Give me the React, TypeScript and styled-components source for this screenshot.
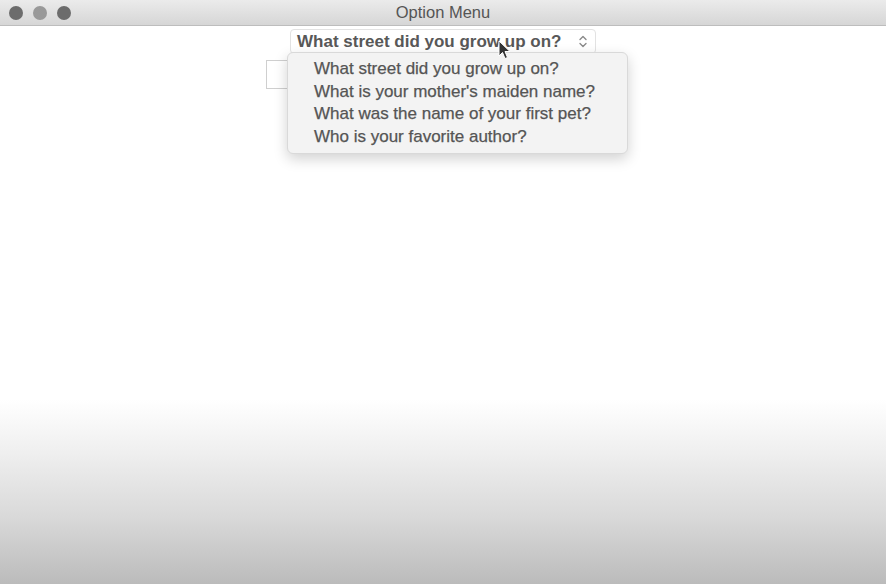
import styled, { createGlobalStyle } from 'styled-components'

const GlobalStyle = createGlobalStyle`
  html, body {
    margin: 0;
    padding: 0;
    height: 100%;
    overflow: hidden;
  }
  body {
    font-family: "Liberation Sans", "DejaVu Sans", Arial, sans-serif;
  }
  #root {
    height: 100%;
  }
`

const questions = [
  'What street did you grow up on?',
  "What is your mother's maiden name?",
  'What was the name of your first pet?',
  'Who is your favorite author?',
]

const Window = styled.div`
  display: flex;
  flex-direction: column;
  height: 100vh;
  width: 100vw;
`

const TitleBar = styled.div`
  position: relative;
  height: 25px;
  flex: none;
  display: flex;
  align-items: center;
  justify-content: center;
  background: linear-gradient(#ebebeb, #d6d6d6);
  border-bottom: 1px solid #bdbdbd;
`

const Lights = styled.div`
  position: absolute;
  left: 9px;
  top: 6px;
  display: flex;
  gap: 10px;
`

const Light = styled.span<{ $dotted?: boolean }>`
  width: 14px;
  height: 14px;
  border-radius: 50%;
  background: ${(p) =>
    p.$dotted
      ? 'radial-gradient(circle, #8a8a8a 0.6px, transparent 0.9px) 0 0 / 2px 2px, #b4b4b4'
      : '#6c6c6c'};
`

const Title = styled.span`
  font-size: 16.5px;
  color: #555;
`

const Content = styled.div`
  flex: 1;
  display: flex;
  flex-direction: column;
  align-items: center;
  background: linear-gradient(#ffffff 0%, #ffffff 67%, #eeeeee 77%, #d9d9d9 88%, #bbbbbb 100%);
`

const SelectWrap = styled.div`
  position: relative;
  margin-top: 3px;
  display: flex;
  flex-direction: column;
  align-items: center;
  gap: 6px;
`

const SelectButton = styled.div`
  width: 306px;
  height: 25px;
  box-sizing: border-box;
  padding: 0 7px 0 6px;
  display: flex;
  align-items: center;
  justify-content: space-between;
  background: #fff;
  border: 1px solid #e2e2e2;
  border-radius: 4px;
  font-size: 17px;
  font-weight: bold;
  color: #585858;
`

const Entry = styled.div`
  width: 354px;
  height: 29px;
  box-sizing: border-box;
  background: #fff;
  border: 1px solid #cfcfcf;
`

const Menu = styled.div`
  position: absolute;
  left: 21px;
  top: 23px;
  width: 341px;
  height: 102px;
  box-sizing: border-box;
  padding: 5px 0 0 26px;
  background: #f3f3f3;
  border: 1px solid #d9d9d9;
  border-radius: 6px;
  box-shadow: 0 5px 14px rgba(0, 0, 0, 0.18);
`

const MenuItem = styled.div`
  height: 22.7px;
  line-height: 22.7px;
  font-size: 17px;
  color: #555;
  white-space: nowrap;
  -webkit-text-stroke: 0.25px #555;
`

const Cursor = styled.svg`
  position: absolute;
  left: 232px;
  top: 11px;
`

const Chevrons = () => (
  <svg width="10" height="15" viewBox="0 0 10 15">
    <path d="M2 5.5 L5 2.5 L8 5.5 M2 9.5 L5 12.5 L8 9.5" fill="none" stroke="#8a8a8a" strokeWidth="1.4" strokeLinecap="round" strokeLinejoin="round" />
  </svg>
)

export default function App() {
  return (
    <>
      <GlobalStyle />
      <Window>
        <TitleBar>
          <Lights>
            <Light />
            <Light $dotted />
            <Light />
          </Lights>
          <Title>Option Menu</Title>
        </TitleBar>
        <Content>
          <SelectWrap>
            <SelectButton>
              <span>{questions[0]}</span>
              <Chevrons />
            </SelectButton>
            <Entry />
            <Menu>
              {questions.map((q) => (
                <MenuItem key={q}>{q}</MenuItem>
              ))}
            </Menu>
            <Cursor width="14" height="20" viewBox="0 0 14 20">
              <path d="M1 1 L1 16 L4.5 12.5 L7 18.5 L9.5 17.5 L7 11.5 L12 11.5 Z" fill="#333" stroke="#fff" strokeWidth="1" strokeLinejoin="round" />
            </Cursor>
          </SelectWrap>
        </Content>
      </Window>
    </>
  )
}
